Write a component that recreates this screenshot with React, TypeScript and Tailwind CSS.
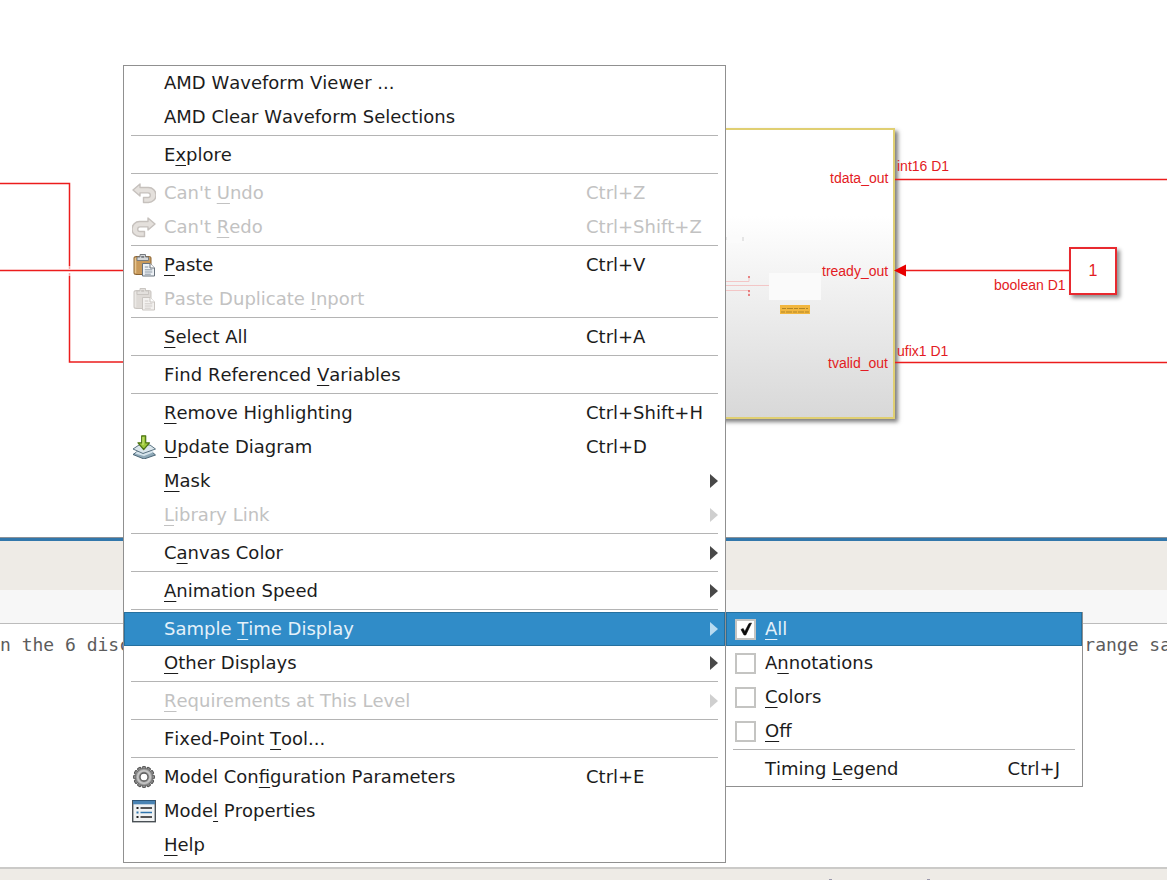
import React from "react";

function Mnemonic({ text }: { text: string }) {
  const at = text.indexOf("&");
  if (at < 0) return <>{text}</>;
  return (
    <>
      {text.slice(0, at)}
      <u className="underline decoration-1 underline-offset-4 [text-decoration-skip-ink:none]">{text[at + 1]}</u>
      {text.slice(at + 2)}
    </>
  );
}

const turnArrow = "M1 9 8 3v3.500h8.500a7.200 7.200 0 0 1 0 15H11.500v-5h4.500a2.300 2.300 0 0 0 0-4.600H8V15Z";

function UndoIcon() {
  return (
    <svg viewBox="0 0 24 24" className="size-6" aria-hidden="true">
      <path d={turnArrow} fill="#e4e0dc" stroke="#c6c1bd" strokeWidth="1.4" strokeLinejoin="round" />
    </svg>
  );
}

function RedoIcon() {
  return (
    <svg viewBox="0 0 24 24" className="size-6 -scale-x-100" aria-hidden="true">
      <path d={turnArrow} fill="#e4e0dc" stroke="#c6c1bd" strokeWidth="1.4" strokeLinejoin="round" />
    </svg>
  );
}

function PasteIcon({ muted = false }: { muted?: boolean }) {
  const board = muted ? "#dedad6" : "#c99a5b";
  const edge = muted ? "#c9c5c1" : "#8a6433";
  const clip = muted ? "#e3e0dd" : "#d5d8da";
  const clipEdge = muted ? "#c9c5c1" : "#777b80";
  const page = muted ? "#f3f1ef" : "#eef2f6";
  const pageEdge = muted ? "#c9c5c1" : "#68727d";
  const ink = muted ? "#cfcbc8" : "#8a96a3";
  return (
    <svg viewBox="0 0 24 24" className="size-6" aria-hidden="true">
      <rect x="2" y="3.500" width="17" height="18" rx="1.500" fill={board} stroke={edge} />
      <path d="M3.500 5v15" stroke={muted ? "#ebe8e5" : "#e7c590"} strokeWidth="1.500" />
      <path d="M5 7.500V4h3V1.500h5.500V4h3v3.500Z" fill={clip} stroke={clipEdge} />
      <rect x="9.200" y="3" width="3" height="1.800" fill={clipEdge} />
      <path d="M10.500 10.500h7.500l4.500 4.500v8h-12Z" fill={page} stroke={pageEdge} strokeLinejoin="round" />
      <path d="M18 10.500V15h4.500" fill="#fff" stroke={pageEdge} />
      <path d="M12.800 14h3.500M12.800 16.800h7.500M12.800 19h7.500M12.800 21.200h6" stroke={ink} />
    </svg>
  );
}

function UpdateIcon() {
  return (
    <svg viewBox="0 0 24 24" className="size-6" aria-hidden="true">
      <path d="M1 19.500 6 16h13l4.500 4-11.500 4Z" fill="#8fa9b8" stroke="#3f5b6c" strokeWidth=".9" />
      <path d="M3 18.500 12 21l10-4-2-1H6Z" fill="#d6e4ec" />
      <path d="M1 14 7 10h11l5.500 4L11 18.500Z" fill="#dbe6ec" stroke="#4b6576" strokeWidth=".9" />
      <path
        d="M9.700.8h4v7h3.800L11.700 14.500 6 7.800h3.700Z"
        fill="#9dc93b"
        stroke="#4c7413"
        strokeWidth="1.200"
        strokeLinejoin="round"
      />
      <path d="M11 2v8" stroke="#d3ec85" />
    </svg>
  );
}

function GearIcon() {
  const teeth = [0, 30, 60, 90, 120, 150, 180, 210, 240, 270, 300, 330];
  return (
    <svg viewBox="0 0 24 24" className="size-6" aria-hidden="true">
      <g fill="#8c8c8c" stroke="#4a4a4a" strokeWidth=".9">
        {teeth.map((a) => (
          <rect key={a} x="10.300" y="1.500" width="3.400" height="4" rx=".8" transform={`rotate(${a} 12 12)`} />
        ))}
      </g>
      <circle cx="12" cy="12" r="8.500" fill="#a3a3a3" stroke="#6a6a6a" strokeWidth=".7" />
      <circle cx="12" cy="12" r="6.300" fill="none" stroke="#c8c8c8" strokeWidth="1.600" />
      <circle cx="12" cy="12" r="4" fill="#fff" stroke="#5a5a5a" strokeWidth="1.300" />
    </svg>
  );
}

function PropertiesIcon() {
  return (
    <svg viewBox="0 0 24 24" className="size-6" aria-hidden="true">
      <rect x=".7" y="1.700" width="22.600" height="21" fill="#f1f3f4" stroke="#4a5055" strokeWidth="1.400" />
      <rect x="1" y="1.500" width="22" height="3.800" fill="#4983b3" />
      <path d="M.5 1.500h23" stroke="#2c5578" />
      <g strokeWidth="1.500">
        <path d="M8.500 9h11.500M8.500 18h11.500" stroke="#222" />
        <path d="M8.500 13.500h11.500" stroke="#2f74ad" />
        <path d="M4.500 9h2M4.500 18h2" stroke="#222" strokeWidth="2" />
        <path d="M4.500 13.500h2" stroke="#2f74ad" strokeWidth="2" />
      </g>
    </svg>
  );
}

type Entry = {
  label: string;
  keys?: string;
  icon?: React.ReactNode;
  disabled?: boolean;
  arrow?: boolean;
  active?: boolean;
};

const groups: Entry[][] = [
  [{ label: "AMD Waveform Viewer ..." }, { label: "AMD Clear Waveform Selections" }],
  [{ label: "E&xplore" }],
  [
    { label: "Can't &Undo", keys: "Ctrl+Z", icon: <UndoIcon />, disabled: true },
    { label: "Can't &Redo", keys: "Ctrl+Shift+Z", icon: <RedoIcon />, disabled: true },
  ],
  [
    { label: "&Paste", keys: "Ctrl+V", icon: <PasteIcon /> },
    { label: "Paste Duplicate &Inport", icon: <PasteIcon muted />, disabled: true },
  ],
  [{ label: "&Select All", keys: "Ctrl+A" }],
  [{ label: "Find Referenced &Variables" }],
  [
    { label: "&Remove Highlighting", keys: "Ctrl+Shift+H" },
    { label: "&Update Diagram", keys: "Ctrl+D", icon: <UpdateIcon /> },
    { label: "&Mask", arrow: true },
    { label: "&Library Link", arrow: true, disabled: true },
  ],
  [{ label: "C&anvas Color", arrow: true }],
  [{ label: "&Animation Speed", arrow: true }],
  [
    { label: "Sample &Time Display", arrow: true, active: true },
    { label: "&Other Displays", arrow: true },
  ],
  [{ label: "&Requirements at This Level", arrow: true, disabled: true }],
  [{ label: "Fixed-Point &Tool..." }],
  [
    { label: "Model Con&figuration Parameters", keys: "Ctrl+E", icon: <GearIcon /> },
    { label: "Mode&l Properties", icon: <PropertiesIcon /> },
    { label: "&Help" },
  ],
];

function Separator() {
  return <div role="separator" className="mx-[7px] mt-px mb-0.5 h-px bg-[#b4b4b4]" />;
}

function MenuRow({ entry }: { entry: Entry }) {
  const tone = entry.active
    ? "bg-[#308cc8] text-[#e4f1fa] ring-1 ring-inset ring-[#25709f]"
    : entry.disabled
      ? "text-[#c2c2c2]"
      : "text-[#1c1c1c]";
  return (
    <div className="relative">
      <button
        type="button"
        disabled={entry.disabled}
        className={`flex h-[34px] w-full items-center pr-[7px] pl-2 text-left whitespace-nowrap ${tone}`}
      >
        <span className="mr-2 flex w-6">{entry.icon}</span>
        <span className="flex-1">
          <Mnemonic text={entry.label} />
        </span>
        <span className="w-[124px]">{entry.keys}</span>
        <span className="flex w-2">
          {entry.arrow && (
            <svg viewBox="0 0 8 14" className="h-3.5 w-2" aria-hidden="true">
              <path
                d="M0 0 8 7 0 14Z"
                fill={entry.active ? "#b9dbf0" : entry.disabled ? "#cfcfcf" : "#484848"}
              />
            </svg>
          )}
        </span>
      </button>
      {entry.active && <SampleTimeMenu />}
    </div>
  );
}

function SampleTimeMenu() {
  const options = [
    { label: "&All", checked: true },
    { label: "A&nnotations", checked: false },
    { label: "&Colors", checked: false },
    { label: "&Off", checked: false },
  ];
  return (
    <div className="absolute top-0 left-full z-10 w-[358px] border border-t-0 border-[#909090] bg-white">
      {options.map((o) => (
        <label
          key={o.label}
          className={`flex h-[34px] items-center gap-[9px] pl-[9px] ${
            o.checked ? "bg-[#308cc8] text-[#e4f1fa] ring-1 ring-inset ring-[#25709f]" : "text-[#1c1c1c]"
          }`}
        >
          <span className="grid size-[21px] place-items-center">
            <input
              type="checkbox"
              defaultChecked={o.checked}
              className="peer col-start-1 row-start-1 size-[21px] appearance-none border-2 border-[#c4c4c2] bg-white"
            />
            <svg
              viewBox="0 0 12 14"
              className="pointer-events-none col-start-1 row-start-1 hidden h-3.5 w-3 peer-checked:block"
              aria-hidden="true"
            >
              <path d="M1 7.500 3.200 6.500 4.800 9.500 9 1.500 11.500 1 5.800 13H4Z" fill="#0a0a0a" stroke="#0a0a0a" strokeWidth=".6" />
            </svg>
          </span>
          <span>
            <Mnemonic text={o.label} />
          </span>
        </label>
      ))}
      <Separator />
      <button
        type="button"
        className="flex h-[34px] w-full items-center justify-between pr-[22px] pl-[39px] text-left text-[#1c1c1c]"
      >
        <span>
          <Mnemonic text="Timing &Legend" />
        </span>
        <span>Ctrl+J</span>
      </button>
    </div>
  );
}

function Diagram() {
  return (
    <section className="relative h-[537px] overflow-hidden bg-white [font-family:'Liberation_Sans',Arial,sans-serif] text-sm leading-4 text-[#e31b23]">
      <div className="absolute top-32 left-[600px] h-[291px] w-[295px] border-2 border-[#e0cf72] bg-linear-to-b from-white from-30% to-[#d8d8d8] shadow-[3px_3px_4px_#00000080]">
        <svg viewBox="0 0 291 287" className="h-full w-full" aria-hidden="true">
          <rect x="126" y="107" width="18" height="6" fill="#fbfbfb" />
          <path d="M141 107v4M124 107v3" stroke="#cfcfcf" />
          <path d="M124 151.500h23v-4M124 155.500h44M124 160.500h23v4" fill="none" stroke="#f3c6c6" />
          <path d="M147 146v2M147 160v2M147 164v2" stroke="#e36060" strokeWidth="1.500" />
          <rect x="167" y="143" width="52" height="27" fill="#fafafa" />
          <rect x="178" y="175" width="30" height="9" fill="#f2b63e" />
          <path d="M180 178.500h26M179 182h28" stroke="#b08526" strokeDasharray="4 1 6 1" />
        </svg>
      </div>
      <svg className="absolute top-0 left-0 h-full w-[1400px]" fill="none" stroke="#ec1c1c" strokeWidth="1.500" aria-hidden="true">
        <path d="M0 183.500H69.500V266M69.500 276V362H124M0 270.500H124" />
        <path d="M69.500 266v3M69.500 273v3" stroke="#f7a3a3" />
        <path d="M895 179.500H1400M904 270.500H1070M895 362.500H1400" />
        <path d="M894 270.500 906 264.500V276.500Z" fill="#e80000" stroke="none" />
      </svg>
      <span className="absolute top-[170px] left-[830px]">tdata_out</span>
      <span className="absolute top-[263px] left-[822px]">tready_out</span>
      <span className="absolute top-[355px] left-[828px]">tvalid_out</span>
      <span className="absolute top-[158px] left-[897px]">int16 D1</span>
      <span className="absolute top-[277px] left-[994px]">boolean D1</span>
      <span className="absolute top-[343px] left-[897px]">ufix1 D1</span>
      <div className="absolute top-[247px] left-[1069px] flex size-12 items-center justify-center border-2 border-[#e8292f] bg-white text-base shadow-[3px_3px_4px_#00000070]">
        1
      </div>
    </section>
  );
}

export default function App() {
  return (
    <main className="relative flex min-h-screen flex-col overflow-hidden bg-white">
      <Diagram />
      <div className="h-[53px] border-t border-[#8c9298] bg-[#eeebe6]">
        <div className="h-[3px] bg-[#3277ab]" />
      </div>
      <div className="h-[34px] border-b border-[#bcbcbc] bg-[#f7f7f7]" />
      <section className="flex flex-1 justify-between overflow-hidden pt-[7px] [font-family:'DejaVu_Sans_Mono',monospace] text-lg whitespace-pre text-[#5c5c5c]">
        <span>n the 6 disc</span>
        <span className="-mr-1">range sa</span>
      </section>
      <footer className="relative h-[13px] border-t-2 border-[#cbcac8] bg-[#eeebe6]">
        <span className="absolute bottom-0 left-[829px] h-px w-[3px] bg-[#9a98ac]" />
        <span className="absolute bottom-0 left-[927px] h-px w-[3px] bg-[#9a98ac]" />
      </footer>

      <nav
        aria-label="Canvas context menu"
        className="absolute top-[65px] left-[123px] w-[603px] border border-[#909090] bg-white [font-family:'DejaVu_Sans',sans-serif] text-lg [font-kerning:none]"
      >
        {groups.map((group, i) => (
          <React.Fragment key={i}>
            {i > 0 && <Separator />}
            {group.map((entry) => (
              <MenuRow key={entry.label} entry={entry} />
            ))}
          </React.Fragment>
        ))}
      </nav>
    </main>
  );
}
